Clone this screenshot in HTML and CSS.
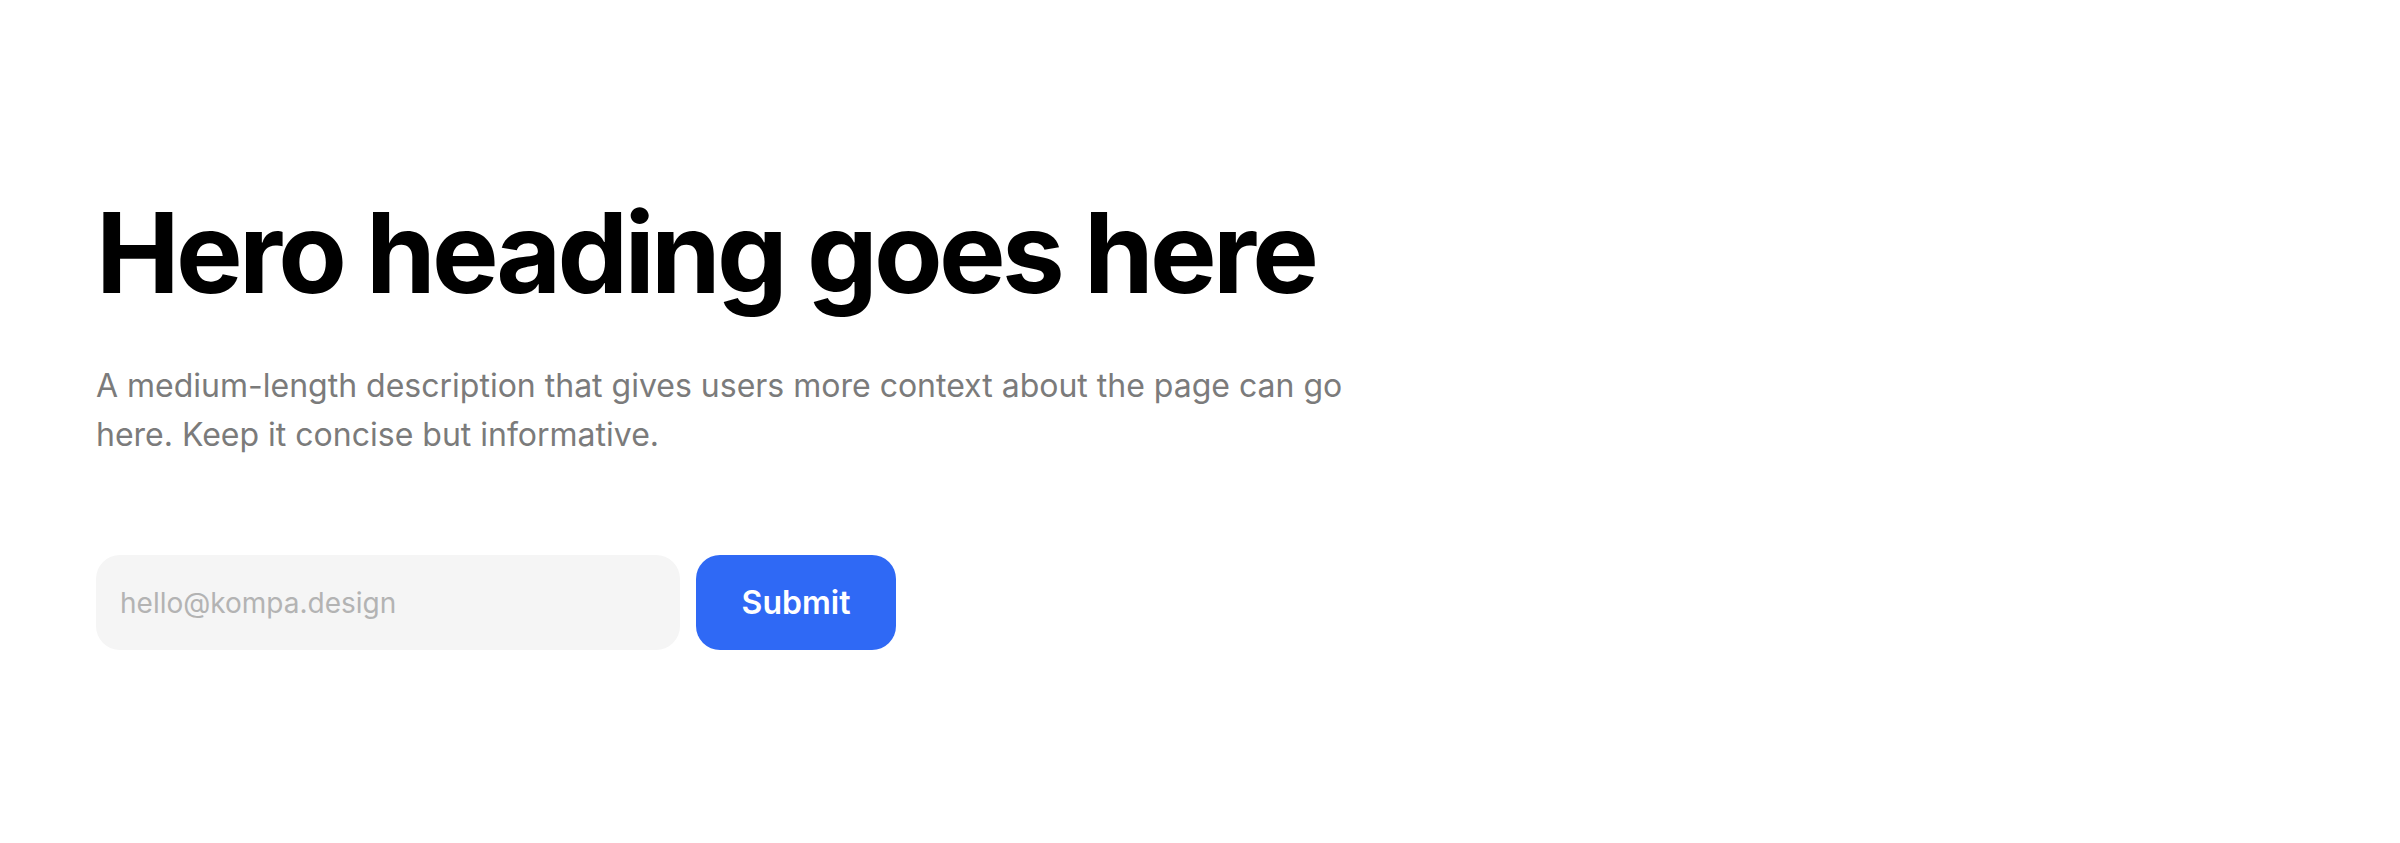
FILE: index.html
```html
<!DOCTYPE html>
<html lang="en">
<head>
<meta charset="utf-8">
<title>Hero</title>
<link rel="stylesheet" href="styles.css">
</head>
<body>
<main class="hero">
  <h1 class="hero-title">Hero heading goes here</h1>
  <p class="hero-text">A medium-length description that gives users more context about the page can go here. Keep it concise but informative.</p>
  <form class="signup">
    <input class="signup-input" type="email" placeholder="hello@kompa.design">
    <button class="signup-button" type="button">Submit</button>
  </form>
</main>
</body>
</html>
```

FILE: styles.css
```css
* { box-sizing: border-box; }
html, body {
  margin: 0;
  padding: 0;
  background: #ffffff;
  font-family: Inter, "Noto Sans", sans-serif;
}
.hero {
  display: flex;
  flex-direction: column;
  align-items: flex-start;
  padding: 185px 96px 0;
}
.hero-title {
  margin: 0;
  font-size: 112px;
  line-height: 1.2;
  font-weight: 700;
  letter-spacing: -0.033em;
  color: #000000;
}
.hero-text {
  margin: 42px 0 0;
  max-width: 1280px;
  font-size: 32px;
  line-height: 49px;
  font-weight: 400;
  color: #7b7b7b;
}
.signup {
  display: flex;
  gap: 16px;
  margin-top: 96px;
}
.signup-input {
  width: 584px;
  height: 95px;
  border: none;
  border-radius: 24px;
  background: #f5f5f5;
  padding: 0 24px;
  font-family: Inter, "Noto Sans", sans-serif;
  font-size: 28px;
  color: #333;
  outline: none;
}
.signup-input::placeholder { color: #b3b3b3; }
.signup-button {
  width: 200px;
  height: 95px;
  border: none;
  border-radius: 24px;
  background: #2f69f5;
  color: #ffffff;
  font-family: Inter, "Noto Sans", sans-serif;
  font-size: 32px;
  font-weight: 600;
  cursor: pointer;
}
```
